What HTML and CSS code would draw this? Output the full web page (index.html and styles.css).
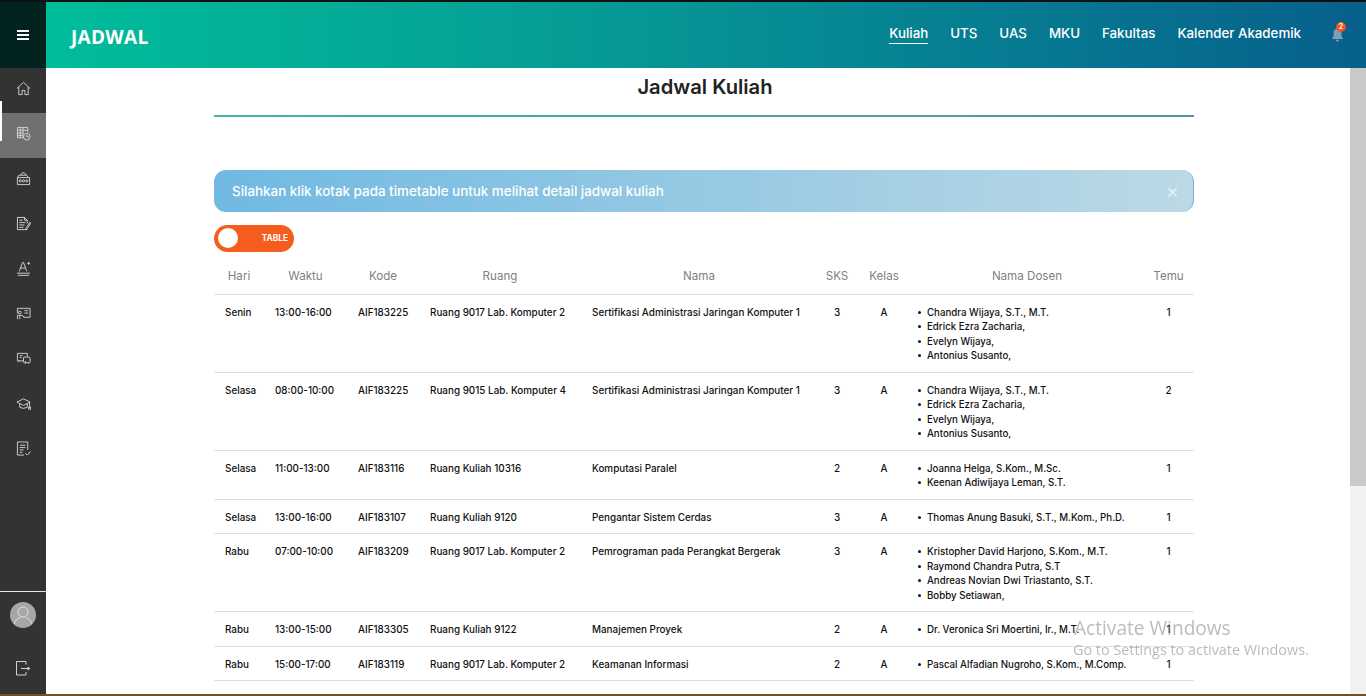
FILE: index.html
```html
<!DOCTYPE html>
<html lang="id">
<head>
    <meta charset="UTF-8">
    <title>Jadwal Kuliah</title>
    <link rel="stylesheet" href="styles.css">
</head>
<body>
<div id="app">
    <aside id="sidebar">
        <div class="burger"><span></span><span></span><span></span></div>
        <ul class="side-menu">
            <li><svg viewBox="0 0 16 16"><path d="M1 8 8 1.500 15 8M3 6.500V14.500H6.500V10H9.500V14.500H13V6.500"/></svg></li>
            <li class="selected"><svg viewBox="0 0 16 16"><path d="M1.500 12.500V1.500H12.500V7M1.500 4.500H12.500M1.500 7.500H8M1.500 10H7M4.500 1.500V12.500M7.500 1.500V12.500M1.500 12.500H8"/><circle cx="11.500" cy="11.500" r="3.500"/><path d="M11.500 9.500V11.500H13.500"/></svg></li>
            <li><svg viewBox="0 0 16 16"><path d="M1.500 7H14.500V14.500H1.500ZM1.500 7 3 4.500H11L13.500 7M5 4.500 7 1.500 10 3 11.500 4.500"/><circle cx="4.500" cy="10.500" r="1.200"/><circle cx="8" cy="10.500" r="1.200"/><circle cx="11.500" cy="10.500" r="1.200"/></svg></li>
            <li><svg viewBox="0 0 16 16"><path d="M12 14.500H1.500V1.500H9L12 4.500V8M9 1.500V4.500H12M3.500 4.500H7M3.500 7H10M3.500 9.500H9M3.500 12H8M15 6.500 11 12.500 10.500 14.500 12 13.500 15.500 8Z"/></svg></li>
            <li><svg viewBox="0 0 16 16"><path d="M3.500 11 7 1.500H8L11.500 11M4.800 7.500H10.200M12 2.500H15M13.500 1V4M1 13H15M2 15.300H14"/></svg></li>
            <li><svg viewBox="0 0 16 16"><path d="M4 2.500H15V12H8M1.500 2.500H4M1.500 2.500V8M9 5H13M9 7.500H13"/><circle cx="4" cy="7" r="1.500"/><path d="M1.500 14V10H6.500L9 12M4 11V14"/></svg></li>
            <li><svg viewBox="0 0 16 16"><path d="M8 10.500H1.500V2.500H12V6M3.500 10.500 3 12M10 10.500V12M4 5H7M4 7H6"/><rect x="8" y="6.500" width="7" height="6" rx="1"/><path d="M10 12.500 9.500 13.500M13 12.500 13.500 13.500"/></svg></li>
            <li><svg viewBox="0 0 16 16"><path d="M1 6.500 8 3 15 6.500 8 10ZM4 8.500V12Q8 14.500 12 12V8.500M14.500 7V12"/><rect x="13.500" y="12" width="2" height="2"/></svg></li>
            <li><svg viewBox="0 0 16 16"><path d="M8.500 15H1.500V1H12.500V9.500M4 4.500H10M4 7H10M4 9.500H8M4 12H7M10 13 12 15 15.500 11"/></svg></li>
        </ul>
        <div class="side-bottom">
            <div class="avatar"><svg viewBox="0 0 26 26"><circle cx="13" cy="10" r="5"/><path d="M4.500 22C5 17 9 16 10.500 15.500M21.500 22C21 17 17 16 15.500 15.500"/></svg></div>
            <div class="logout"><svg viewBox="0 0 16 16"><path d="M11 4.500V1.500H1.500V15H11V12M6 8.500H13"/><path class="fill" d="M12.500 6.500 15.500 8.500 12.500 10.500Z"/></svg></div>
        </div>
    </aside>
    <div id="main">
        <header id="topbar">
            <div class="brand">JADWAL</div>
            <nav class="top-nav">
                <a class="selected" href="#">Kuliah</a>
                <a href="#">UTS</a>
                <a href="#">UAS</a>
                <a href="#">MKU</a>
                <a href="#">Fakultas</a>
                <a href="#">Kalender Akademik</a>
            </nav>
            <div class="bell">
                <svg viewBox="0 0 14 16"><path d="M7 0.500C4.500 0.500 2.500 2.500 2.500 5.500V9L0.500 12.500H13.500L11.500 9V5.500C11.500 2.500 9.500 0.500 7 0.500ZM5 13.500C5.300 15 6 15.500 7 15.500S8.700 15 9 13.500Z"/></svg>
                <span class="badge">2</span>
            </div>
        </header>
        <div id="scroll-area">
            <div id="content">
                <h1>Jadwal Kuliah</h1>
                <div class="title-line"></div>
                <div class="alert">
                    <span>Silahkan klik kotak pada timetable untuk melihat detail jadwal kuliah</span>
                    <span class="close">&times;</span>
                </div>
                <div class="toggle"><i></i><span>TABLE</span></div>
                <table id="jadwal">
                    <thead>
                        <tr>
                            <th class="c-hari">Hari</th><th class="c-waktu">Waktu</th><th class="c-kode">Kode</th>
                            <th class="c-ruang">Ruang</th><th class="c-nama">Nama</th><th class="c-sks">SKS</th>
                            <th class="c-kelas">Kelas</th><th class="c-dosen">Nama Dosen</th><th class="c-temu">Temu</th>
                        </tr>
                    </thead>
                    <tbody>
                        <tr>
                            <td>Senin</td><td>13:00-16:00</td><td>AIF183225</td><td>Ruang 9017 Lab. Komputer 2</td>
                            <td>Sertifikasi Administrasi Jaringan Komputer 1</td><td class="mid">3</td><td class="mid">A</td>
                            <td><ul><li>Chandra Wijaya, S.T., M.T.</li><li>Edrick Ezra Zacharia,</li><li>Evelyn Wijaya,</li><li>Antonius Susanto,</li></ul></td>
                            <td class="mid">1</td>
                        </tr>
                        <tr>
                            <td>Selasa</td><td>08:00-10:00</td><td>AIF183225</td><td>Ruang 9015 Lab. Komputer 4</td>
                            <td>Sertifikasi Administrasi Jaringan Komputer 1</td><td class="mid">3</td><td class="mid">A</td>
                            <td><ul><li>Chandra Wijaya, S.T., M.T.</li><li>Edrick Ezra Zacharia,</li><li>Evelyn Wijaya,</li><li>Antonius Susanto,</li></ul></td>
                            <td class="mid">2</td>
                        </tr>
                        <tr>
                            <td>Selasa</td><td>11:00-13:00</td><td>AIF183116</td><td>Ruang Kuliah 10316</td>
                            <td>Komputasi Paralel</td><td class="mid">2</td><td class="mid">A</td>
                            <td><ul><li>Joanna Helga, S.Kom., M.Sc.</li><li>Keenan Adiwijaya Leman, S.T.</li></ul></td>
                            <td class="mid">1</td>
                        </tr>
                        <tr>
                            <td>Selasa</td><td>13:00-16:00</td><td>AIF183107</td><td>Ruang Kuliah 9120</td>
                            <td>Pengantar Sistem Cerdas</td><td class="mid">3</td><td class="mid">A</td>
                            <td><ul><li>Thomas Anung Basuki, S.T., M.Kom., Ph.D.</li></ul></td>
                            <td class="mid">1</td>
                        </tr>
                        <tr>
                            <td>Rabu</td><td>07:00-10:00</td><td>AIF183209</td><td>Ruang 9017 Lab. Komputer 2</td>
                            <td>Pemrograman pada Perangkat Bergerak</td><td class="mid">3</td><td class="mid">A</td>
                            <td><ul><li>Kristopher David Harjono, S.Kom., M.T.</li><li>Raymond Chandra Putra, S.T</li><li>Andreas Novian Dwi Triastanto, S.T.</li><li>Bobby Setiawan,</li></ul></td>
                            <td class="mid">1</td>
                        </tr>
                        <tr>
                            <td>Rabu</td><td>13:00-15:00</td><td>AIF183305</td><td>Ruang Kuliah 9122</td>
                            <td>Manajemen Proyek</td><td class="mid">2</td><td class="mid">A</td>
                            <td><ul><li>Dr. Veronica Sri Moertini, Ir., M.T.</li></ul></td>
                            <td class="mid">1</td>
                        </tr>
                        <tr>
                            <td>Rabu</td><td>15:00-17:00</td><td>AIF183119</td><td>Ruang 9017 Lab. Komputer 2</td>
                            <td>Keamanan Informasi</td><td class="mid">2</td><td class="mid">A</td>
                            <td><ul><li>Pascal Alfadian Nugroho, S.Kom., M.Comp.</li></ul></td>
                            <td class="mid">1</td>
                        </tr>
                    </tbody>
                </table>
            </div>
            <div id="scrollbar"><div class="thumb"></div></div>
        </div>
    </div>
</div>
<div id="watermark">
    <div class="wm-big">Activate Windows</div>
    <div class="wm-small">Go to Settings to activate Windows.</div>
</div>
</body>
</html>
```

FILE: styles.css
```css
*{
    box-sizing: border-box;
}
html,body{
    margin: 0;
    height: 100%;
    overflow: hidden;
}
body{
    font-family: "Inter", "Liberation Sans", sans-serif;
    color: #111;
    background: #fff;
}
ul{
    margin: 0;
    padding: 0;
    list-style: none;
}
a{
    color: inherit;
    text-decoration: none;
}
#app{
    display: flex;
    height: 694px;
    border-top: 2px solid #111;
}
#sidebar{
    width: 46px;
    flex: none;
    background: #333;
    display: flex;
    flex-direction: column;
}
.burger{
    height: 66px;
    flex: none;
    background: #02231f;
    display: flex;
    flex-direction: column;
    justify-content: center;
    align-items: center;
    gap: 2px;
}
.burger span{
    width: 12px;
    height: 2px;
    background: #fff;
}
.side-menu{
    flex: 1;
}
.side-menu li{
    height: 45px;
    display: flex;
    align-items: center;
    justify-content: center;
}
.side-menu li.selected{
    background: #707070;
    position: relative;
}
.side-menu li.selected::before{
    content: "";
    position: absolute;
    left: 0;
    top: -12px;
    width: 2px;
    height: 40px;
    background: #fff;
}
.side-menu svg{
    width: 15px;
    height: 15px;
    margin-bottom: 5px;
    fill: none;
    stroke: #d2d2d2;
    stroke-width: 1;
}
.logout svg{
    width: 16px;
    height: 16px;
    fill: none;
    stroke: #d2d2d2;
    stroke-width: 1;
}
.logout .fill{
    fill: #d2d2d2;
    stroke: none;
}
.side-bottom{
    height: 103px;
    flex: none;
    border-top: 1px solid #e5e5e5;
    display: flex;
    flex-direction: column;
    align-items: center;
    padding-top: 10px;
}
.avatar{
    width: 26px;
    height: 26px;
    border-radius: 50%;
    background: #a6a6a6;
}
.avatar svg{
    width: 26px;
    height: 26px;
    fill: none;
    stroke: #e2e2e2;
    stroke-width: 1;
    display: block;
}
.logout{
    margin-top: 32px;
}
#main{
    flex: 1;
    min-width: 0;
    display: flex;
    flex-direction: column;
}
#topbar{
    height: 66px;
    flex: none;
    display: flex;
    align-items: center;
    padding: 0 22px 0 24px;
    color: #fff;
    background: linear-gradient(90deg, #00bd9a 0%, #05a597 30%, #067e92 70%, #075f8c 100%);
}
.brand{
    font-family: "Open Sans", "Liberation Sans", sans-serif;
    font-size: 19px;
    font-weight: 700;
    letter-spacing: .3px;
    flex: 1;
    padding: 4px 0 0 1px;
}
.top-nav{
    display: flex;
    gap: 22px;
    font-size: 13.300px;
    font-weight: 500;
    margin-bottom: 2px;
}
.top-nav a{
    padding-bottom: 2px;
    border-bottom: 1px solid transparent;
}
.top-nav a.selected{
    border-bottom-color: #fff;
}
.bell{
    position: relative;
    width: 13px;
    height: 14px;
    margin-left: 30px;
    margin-top: -1px;
}
.bell svg{
    display: block;
    width: 13px;
    height: 14px;
    fill: #7f9fb0;
}
.badge{
    position: absolute;
    top: -6px;
    right: -2px;
    width: 10px;
    height: 10px;
    border-radius: 50%;
    background: #f4511e;
    font-size: 7px;
    line-height: 10px;
    text-align: center;
    font-weight: 700;
}
#scroll-area{
    flex: 1;
    min-height: 0;
    display: flex;
}
#content{
    flex: 1;
    min-width: 0;
    padding: 0 156px 0 168px;
    overflow: hidden;
}
h1{
    margin: 7px 0 0;
    padding-left: 2px;
    font-size: 20.200px;
    line-height: 24px;
    font-weight: 600;
    text-align: center;
    color: #222;
}
.title-line{
    height: 2px;
    margin-top: 16px;
    background: linear-gradient(90deg, #3fb5a6, #5a93a5);
}
.alert{
    margin-top: 53px;
    height: 42px;
    border-radius: 12px;
    border-right: 1px solid #6fb4dc;
    padding: 0 18px;
    display: flex;
    align-items: center;
    justify-content: space-between;
    color: #fff;
    font-size: 13.400px;
    font-weight: 500;
    background: linear-gradient(90deg, #70b9e2, #bcd9e5);
}
.close{
    font-size: 20px;
    font-weight: 400;
    opacity: .6;
    margin-right: -4px;
}
.toggle{
    margin-top: 13px;
    width: 80px;
    height: 27px;
    border-radius: 14px;
    background: #f55d1f;
    display: flex;
    align-items: center;
    justify-content: space-between;
    padding: 0 6px 1px 4px;
    color: #fff;
    font-size: 8.300px;
    font-weight: 700;
}
.toggle i{
    width: 20px;
    height: 20px;
    border-radius: 50%;
    background: #fff;
}
#jadwal{
    width: 100%;
    margin-top: 6px;
    border-collapse: collapse;
    table-layout: fixed;
    font-size: 9.900px;
    font-weight: 500;
}
#jadwal th{
    height: 36px;
    font-size: 11.600px;
    font-weight: 400;
    color: #808080;
    text-align: center;
    border-bottom: 1px solid #dedede;
}
#jadwal td{
    padding: 10px 0 0 11px;
    vertical-align: top;
    border-bottom: 1px solid #dedede;
    line-height: 14.500px;
}
#jadwal td.mid{
    padding-left: 0;
    text-align: center;
}
#jadwal td ul{
    margin-left: -4px;
    padding-top: 1px;
    padding-bottom: 8px;
    font-size: 9.700px;
}
#jadwal td li::before{
    content: "";
    display: inline-block;
    width: 3px;
    height: 3px;
    border-radius: 50%;
    background: #111;
    margin-right: 6px;
    vertical-align: 2px;
}
.c-hari{width: 50px;}
.c-waktu{width: 83px;}
.c-kode{width: 72px;}
.c-ruang{width: 162px;}
.c-nama{width: 236px;}
.c-sks{width: 40px;}
.c-kelas{width: 54px;}
.c-dosen{width: 232px;}
.c-temu{width: 51px;}
#scrollbar{
    width: 16px;
    flex: none;
    background: #f1f1f1;
}
#scrollbar .thumb{
    height: 418px;
    background: #c9c9c9;
}
#watermark{
    position: fixed;
    left: 1073px;
    top: 615px;
    color: rgba(120,120,120,.5);
    font-family: "Open Sans", "Liberation Sans", sans-serif;
    pointer-events: none;
}
.wm-big{
    font-size: 19.100px;
    padding-left: 1px;
}
.wm-small{
    font-size: 14.400px;
    margin-top: -1px;
}
#app::after{
    content: "";
    position: fixed;
    left: 0;
    right: 0;
    bottom: 0;
    height: 2px;
    background: #6b5326;
}
```
